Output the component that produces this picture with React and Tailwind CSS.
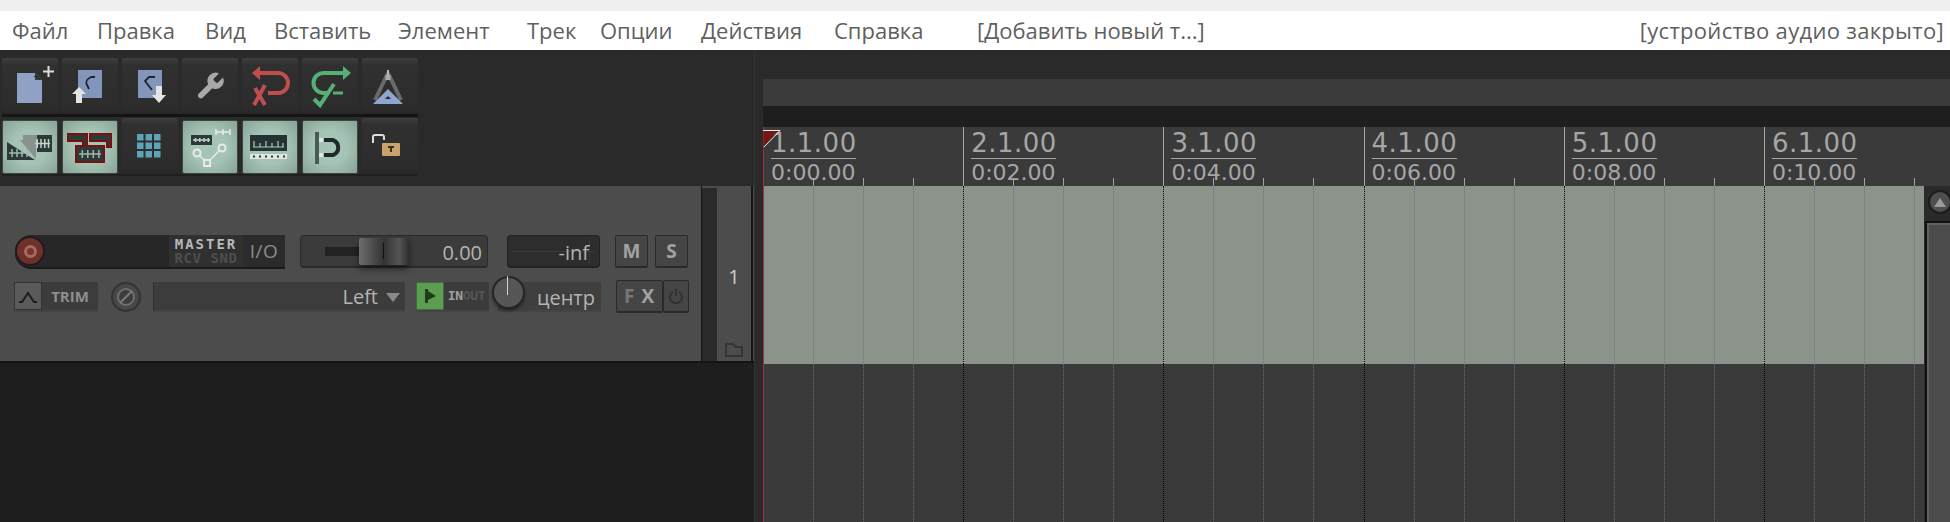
import React from 'react';

const menuItems = [
  ['Файл', 'w-[85px]'],
  ['Правка', 'w-[108px]'],
  ['Вид', 'w-[69px]'],
  ['Вставить', 'w-[124px]'],
  ['Элемент', 'w-[129px]'],
  ['Трек', 'w-[73px]'],
  ['Опции', 'w-[101px]'],
  ['Действия', 'w-[133px]'],
  ['Справка', 'w-[143px]'],
];

// toolbar button, light variant is for toggled-on actions
const ToolButton = ({ active, children }) => (
  <div className={`w-[56px] rounded-[2px] shrink-0 ${active ? 'h-[54px] mt-[2px] bg-[radial-gradient(circle,#a6c4b5_45%,#86a395_100%)] border border-[#3c4540]' : 'h-[56px] bg-[linear-gradient(#3d3d3d,#303030_12%,#2c2c2c_90%,#262626)]'}`}>
    <svg width="56" height="56" viewBox="0 0 56 56" className={`blur-[0.3px] ${active ? '-m-px' : ''}`}>{children}</svg>
  </div>
);

const Wave = ({ x, y, w, h, color = '#9fb8ab' }) => (
  <g stroke={color} strokeWidth="1.500" fill="none">
    <path d={`M${x} ${y + h / 2}h${w}`} />
    {[0.15, 0.4, 0.65, 0.9].map((p) => (
      <path key={p} d={`M${x + w * p} ${y + 1}v${h - 2}`} />
    ))}
  </g>
);

const row1 = [
  <>
    <path d="M15 15h18l7 7v23H15z" fill="#8fa1c4" />
    <path d="M33 15v7h7z" fill="#2e2e2e" />
    <path d="M31 18h2v4h4z" fill="#3b4252" />
    <path d="M41 13.500h11M46.500 8v11" stroke="#ddd" strokeWidth="2" />
  </>,
  <>
    <rect x="16" y="12" width="24" height="28" fill="#8296bb" />
    <path d="M33 19h-4c-4 2-6 4-4 8l2 4" stroke="#1f2530" strokeWidth="1.800" fill="none" />
    <path d="M17 29l7 7h-4v9h-6v-9h-4z" fill="#e4e4e4" />
  </>,
  <>
    <rect x="16" y="12" width="24" height="28" fill="#8296bb" />
    <path d="M33 19h-6l-4 4 7 9" stroke="#1f2530" strokeWidth="1.800" fill="none" />
    <path d="M34 28h6v9h4l-7 8-7-8h4z" fill="#e4e4e4" />
  </>,
  <g transform="translate(12 12) scale(1.350)">
    <path d="M14.700 6.300a1 1 0 0 0 0 1.400l1.600 1.600a1 1 0 0 0 1.400 0l3.770-3.770a6 6 0 0 1-7.940 7.940l-6.910 6.910a2.120 2.120 0 0 1-3-3l6.910-6.910a6 6 0 0 1 7.940-7.940l-3.760 3.760z" fill="#a8a8a8" />
  </g>,
  <>
    <path d="M12 15h24a10 10 0 0 1 0 20h-10" stroke="#c04e4e" strokeWidth="4" fill="none" />
    <path d="M18 8l-8 7 8 7z" fill="#c04e4e" />
    <path d="M12 47l11-20M13 30l10 17" stroke="#c04e4e" strokeWidth="4" fill="none" />
  </>,
  <>
    <path d="M42 15H22a10 10 0 0 0-1 20h4" stroke="#54b074" strokeWidth="4" fill="none" />
    <path d="M41 8l8 7-8 7z" fill="#54b074" />
    <path d="M12 41l6 6 14-21" stroke="#54b074" strokeWidth="4" fill="none" />
    <path d="M31 35h10" stroke="#54b074" strokeWidth="3" />
  </>,
  <>
    <path d="M26 15L13 42M26 15l13 27" stroke="#6a6a6a" strokeWidth="4" />
    <path d="M26 12v8" stroke="#bbb" strokeWidth="2" />
    <rect x="23.500" y="17" width="5" height="5" fill="#aaa" />
    <path d="M26 31l15 15H11z" fill="#8ea5cf" />
    <path d="M26 38l3 3h-6z" fill="#2a2a2a" />
  </>,
];

const row2 = [
  <>
    <path d="M5 22l28 18H5z" fill="#2b3a39" />
    <path d="M18 20h16v19z" fill="#87938c" />
    <rect x="21" y="15" width="14" height="5" fill="#87938c" />
    <rect x="35" y="15" width="15" height="17" fill="#2b3a39" />
    <Wave x={7} y={28} w={20} h={10} />
    <Wave x={33} y={18} w={15} h={11} color="#c3d4cb" />
  </>,
  <>
    <path d="M6 14h19v13h-4v-6H6z M28 14h21v13h-4v-6H28z" fill="#2c3a3a" stroke="#7a0f0f" strokeWidth="2" />
    <rect x="14" y="26" width="28" height="16" fill="#2c3a3a" stroke="#7a0f0f" strokeWidth="2" />
    <Wave x={17} y={29} w={22} h={10} />
  </>,
  <>
    {[15, 23.5, 32].map((x) => [16, 24.5, 33].map((y) => (
      <rect key={`${x}-${y}`} x={x} y={y} width="6.500" height="6.500" fill="#5fa3b8" />
    )))}
  </>,
  <>
    <rect x="9" y="15" width="21" height="10" fill="#2b3a39" />
    <Wave x={11} y={17} w={17} h={6} color="#c3d4cb" />
    <path d="M34 12h14M34 9v6M48 9v6M41 9v6" stroke="#e6ece8" strokeWidth="1.500" />
    <path d="M15 33l10 10 15-15" stroke="#e6ece8" strokeWidth="1.500" fill="none" />
    <circle cx="15" cy="33" r="3.500" fill="#a3c0b1" stroke="#e6ece8" strokeWidth="2" />
    <rect x="22" y="40" width="6" height="6" fill="#a3c0b1" stroke="#e6ece8" strokeWidth="2" />
    <circle cx="40" cy="28" r="3.500" fill="#a3c0b1" stroke="#e6ece8" strokeWidth="2" />
  </>,
  <>
    <rect x="8" y="15" width="37" height="16" fill="#243333" />
    <path d="M11 27h31M12 27v-6M18 27v-4M24 27v-6M30 27v-4M36 27v-6M41 27v-4" stroke="#b4c8bd" strokeWidth="1.200" fill="none" />
    <rect x="8" y="34" width="37" height="5" fill="#dfe7e2" />
    {[11, 17, 23, 29, 35, 41].map((x) => <rect key={x} x={x} y="35.500" width="2" height="2" fill="#333" />)}
  </>,
  <>
    <rect x="13" y="12" width="4" height="32" fill="#4a5a54" />
    <rect x="17" y="18" width="4" height="4" fill="#dfe7e2" />
    <rect x="17" y="33" width="4" height="4" fill="#dfe7e2" />
    <path d="M22 20h9a8 8 0 0 1 0 15h-9" stroke="#20292a" strokeWidth="4" fill="none" />
  </>,
  <>
    <path d="M11 25v-6a2 2 0 0 1 2-2h7a2 2 0 0 1 2 2v3" stroke="#dcdcdc" strokeWidth="2" fill="none" />
    <rect x="20" y="25" width="18" height="13" rx="1" fill="#c9a36b" />
    <path d="M26 29h6M29 29v5" stroke="#3a2f20" strokeWidth="2" />
  </>,
];

const Toolbar = () => (
  <div className="pl-[2px] pt-[8px] h-[136px] bg-[#2a2a2a]">
    <div className="flex gap-[4px] w-[416px] border-b-[3px] border-[#141414]">
      {row1.map((icon, i) => <ToolButton key={i}>{icon}</ToolButton>)}
    </div>
    <div className="flex gap-[4px] w-[416px] pt-[1px] border-b-[2px] border-[#202020]">
      {row2.map((icon, i) => <ToolButton key={i} active={i !== 2 && i !== 6}>{icon}</ToolButton>)}
    </div>
  </div>
);

// small beveled label button, M / S / FX
const SmallBtn = ({ className, children }) => (
  <div className={`flex items-center justify-center rounded-[2px] bg-[#454545] border border-[#2a2a2a] border-b-2 text-[#a2a2a2] font-bold ${className}`}>
    {children}
  </div>
);

const TrackPanel = () => (
  <div className="flex h-[177px] bg-[#4c4c4c] border-b-[2px] border-[#141414] font-['Open_Sans',sans-serif]">
    <div className="w-[702px] shrink-0 pt-[49px] border-r border-[#141414]">
      {/* top row: record, name, fader, meter, M/S */}
      <div className="flex items-start pl-[15px] h-[34px]">
        <div className="flex h-[34px] w-[270px] rounded-l-[16px] bg-[#272727] border-b-2 border-[#1a1a1a] items-center">
          <div className="w-[30px] h-[30px] rounded-full bg-[#201c1c] flex items-center justify-center shrink-0">
            <div className="w-[26px] h-[26px] rounded-full bg-[#70302a] flex items-center justify-center">
              <div className="w-[13px] h-[13px] rounded-full border-[3px] border-[#a66a62] bg-[#7a352e]" />
            </div>
          </div>
          <div className="flex-1" />
          <div className="w-[74px] h-[32px] bg-[#303030] text-center font-['DejaVu_Sans_Mono',monospace] text-[14px] leading-[14px] font-bold tracking-[2px] pt-[2px] whitespace-nowrap">
            <div className="text-[#b8b8b8]">MASTER</div>
            <div className="text-[#4e4e4e] tracking-[0.6px]">RCV SND</div>
          </div>
          <div className="w-[42px] h-[32px] bg-[#2b2b2b] text-[#8c8c8c] text-[19px] tracking-[0.5px] flex items-center justify-center">I/O</div>
        </div>
        <div className="relative ml-[15px] w-[188px] h-[33px] rounded-[4px] bg-[#3b3b3b] border border-[#2a2a2a] border-b-2 flex items-center justify-end pr-[5px] pt-[3px] text-[20px] text-[#b4b4b4]">
          <div className="absolute left-[24px] top-[11px] w-[40px] h-[9px] bg-[#222]" />
          <div className="absolute left-[58px] top-[2px] w-[50px] h-[27px] rounded-[2px] bg-[linear-gradient(90deg,#6e6e6e,#555_20%,#333_50%,#555_80%,#2e2e2e)] shadow-[0_4px_6px_rgba(0,0,0,0.5)]">
            <div className="ml-[24px] mt-[5px] w-[1px] h-[16px] bg-[#111]" />
          </div>
          0.00
        </div>
        <div className="relative ml-[19px] w-[93px] h-[33px] rounded-[4px] bg-[#2d2d2d] border border-[#222] border-b-2 flex items-center justify-end pr-[10px] pt-[3px] text-[20px] text-[#b4b4b4]">
          <div className="absolute left-[4px] right-[4px] top-[15px] h-px bg-[#3a3a3a]" />
          <div className="absolute right-[9px] top-[2px] bottom-[2px] w-px bg-[#3a3a3a]" />
          <span className="relative">-inf</span>
        </div>
        <SmallBtn className="ml-[15px] w-[33px] h-[33px] text-[19px]">M</SmallBtn>
        <SmallBtn className="ml-[7px] w-[33px] h-[33px] text-[19px]">S</SmallBtn>
      </div>
      {/* bottom row: trim, phase, input, pan, fx */}
      <div className="flex items-start pl-[14px] mt-[13px] h-[32px]">
        <div className="flex h-[30px] w-[84px] bg-[#3c3c3c] border-b-[2px] border-[#444] items-stretch">
          <div className="w-[28px] bg-[#5a5a5a] border border-[#333] flex items-center justify-center">
            <svg width="24" height="20" viewBox="0 0 24 20"><path d="M3 16h3l6-9 6 9h3" stroke="#1e1e1e" strokeWidth="2" fill="none" /></svg>
          </div>
          <div className="flex-1 text-center text-[15px] leading-[28px] font-bold text-[#8e8e8e]">TRIM</div>
        </div>
        <div className="ml-[13px] w-[30px] h-[30px] rounded-full bg-[#484848] border-[2px] border-[#333] flex items-center justify-center">
          <svg width="22" height="22" viewBox="0 0 22 22"><circle cx="11" cy="11" r="8" stroke="#6e6e6e" strokeWidth="2" fill="#3c3c3c" /><path d="M5 17L17 5" stroke="#7c7c7c" strokeWidth="2" /></svg>
        </div>
        <div className="ml-[12px] w-[252px] h-[30px] bg-[#3c3c3c] border-b-[2px] border-[#444] border-l border-l-[#2e2e2e] flex items-center justify-end pr-[4px] pt-[2px] text-[20px] text-[#b4b4b4]">
          Left
          <svg width="16" height="12" viewBox="0 0 16 12" className="ml-[7px]"><path d="M1 2h14l-7 9z" fill="#8a8a8a" /></svg>
        </div>
        <div className="ml-[11px] flex h-[30px] w-[73px] bg-[#3b3b3b] border-b-[2px] border-[#444]">
          <div className="w-[28px] h-[28px] bg-[#5c9d52] border border-[#3f6b38] flex items-center justify-center">
            <svg width="14" height="16" viewBox="0 0 14 16"><path d="M2 1v14h3v-3l8-4-8-5V1z" fill="#1f3d1b" /></svg>
          </div>
          <div className="flex-1 flex items-center justify-center font-['DejaVu_Sans_Mono',monospace] text-[13px] font-bold tracking-[-0.3px]">
            <span className="text-[#a0a0a0]">IN</span><span className="text-[#555]">OUT</span>
          </div>
        </div>
        <div className="relative ml-[9px] w-[103px] h-[30px] bg-[#3f3f3f] border-b-[2px] border-[#444] flex items-center justify-end pr-[6px] pt-[3px] text-[20px] text-[#b4b4b4]">
          <div className="absolute left-[-6px] top-[-6px] w-[33px] h-[33px] rounded-full bg-[#565656] border-[2px] border-[#262626] shadow-[0_2px_3px_rgba(0,0,0,0.4)]" />
          <div className="absolute left-[9px] top-[-6px] w-[1px] h-[19px] bg-[#cfcfcf]" />
          центр
        </div>
        <div className="ml-[15px] -mt-[2px] flex w-[73px] h-[33px]">
          <SmallBtn className="w-[47px] text-[19px] tracking-[7px] pl-[6px]">
            <span className="text-[#777]">F</span><span className="text-[#a2a2a2]">X</span>
          </SmallBtn>
          <SmallBtn className="w-[26px]">
            <svg width="16" height="16" viewBox="0 0 16 16"><path d="M5 4a6 6 0 1 0 6 0M8 1v7" stroke="#303030" strokeWidth="2" fill="none" /></svg>
          </SmallBtn>
        </div>
      </div>
    </div>
    <div className="w-[15px] bg-[#2a2a2a] mt-[2px]" />
    <div className="w-[36px] border-r-2 border-[#141414] flex flex-col items-center pt-[78px] pb-[4px] justify-between text-[20px] leading-[26px] text-[#cccccc]">
      1
      <svg width="18" height="14" viewBox="0 0 18 14"><path d="M1 1h7l3 3h6v9H1z" stroke="#343434" strokeWidth="2" fill="none" /></svg>
    </div>
  </div>
);

const bars = ['1.1.00', '2.1.00', '3.1.00', '4.1.00', '5.1.00', '6.1.00'];
const times = ['0:00.00', '0:02.00', '0:04.00', '0:06.00', '0:08.00', '0:10.00'];
const subs = [1, 2, 3];

const Ruler = () => (
  <div className="flex h-[59px] bg-[#3a3a3a] overflow-hidden relative">
    {bars.map((b, i) => (
      <div key={b} className={`w-[200.2px] shrink-0 border-l ${i === 0 ? 'border-[#a03040]' : 'border-[#a5a5a5]'}`}>
        <div className="pl-[7px] pt-[1px] font-['DejaVu_Sans',sans-serif] text-[#a6a6a6]">
          <div className="w-[85px] h-[31px] border-b border-[#a6a6a6] text-[26px] leading-[31px] tracking-[0.5px]">{b}</div>
          <div className="text-[22px] leading-[27px] h-[19px]">{times[i]}</div>
        </div>
        <div className="flex h-[8px]">
          <div className="w-[49px] shrink-0" />
          {subs.map((s) => <div key={s} className="w-[50px] shrink-0 border-l border-[#a5a5a5]" />)}
        </div>
      </div>
    ))}
    {/* start marker */}
    <svg width="18" height="18" viewBox="0 0 18 18" className="absolute left-0 top-[3px]">
      <path d="M0.500 0.500H16L0.500 16z" fill="#741518" />
      <path d="M0 0.500H17L1 17" stroke="#e8e8e8" strokeWidth="1" fill="none" />
    </svg>
  </div>
);

// vertical grid for item and empty area below it
const GridRow = ({ className, subColor, barColor, height }) => (
  <div className={`flex overflow-hidden ${height} ${className}`}>
    {bars.map((b, i) => (
      <div key={b} className={`w-[200.2px] shrink-0 flex border-l ${i === 0 ? 'border-solid border-[#a03040]' : `border-dotted ${barColor}`}`}>
        <div className="w-[49px] shrink-0" />
        {subs.map((s) => <div key={s} className={`w-[50px] shrink-0 border-l border-dotted ${subColor}`} />)}
      </div>
    ))}
  </div>
);

export default function App() {
  return (
    <div className="w-[1950px] h-[522px] overflow-hidden bg-[#1e1e1e]">
      <div className="h-[11px] bg-[#f0f0f0]" />
      <div className="flex items-center h-[39px] pl-[12px] pr-[6px] bg-white text-[22px] text-[#5f5f5f] font-['Open_Sans',sans-serif]">
        {menuItems.map(([label, w]) => <div key={label} className={w}>{label}</div>)}
        <div>[Добавить новый т...]</div>
        <div className="ml-auto tracking-[0.3px]">[устройство аудио закрыто]</div>
      </div>
      <div className="flex h-[472px]">
        <div className="w-[755px] shrink-0 flex flex-col border-r border-[#333]">
          <Toolbar />
          <TrackPanel />
          <div className="flex-1 bg-[#1e1e1e]" />
        </div>
        <div className="flex-1 min-w-0 flex flex-col bg-[#2a2a2a] pl-[8px]">
          <div className="h-[29px] bg-[#2a2a2a]" />
          <div className="h-[27px] bg-[#3b3b3b]" />
          <div className="h-[21px] bg-[#1e1e1e]" />
          <Ruler />
          <div className="flex flex-1 min-h-0">
            <div className="w-[1161px] shrink-0 flex flex-col">
              <GridRow height="h-[178px]" className="bg-[#8c938b]" subColor="border-[#6f7580]" barColor="border-black" />
              <GridRow height="flex-1" className="bg-[#3a3a3a]" subColor="border-[#6a6a6a]" barColor="border-black" />
            </div>
            <div className="flex-1 flex flex-col bg-[#2a2a2a]">
              <div className="w-[24px] h-[24px] mt-[4px] ml-[4px] rounded-full bg-[#4e4e4e] border-2 border-[#1c1c1c] flex items-center justify-center">
                <svg width="12" height="9" viewBox="0 0 12 9"><path d="M6 0l6 9H0z" fill="#9a9a9a" /></svg>
              </div>
              <div className="ml-[1px] flex-1 mt-[7px] border-l-2 border-t-2 border-[#111]">
                <div className="h-full bg-[#4c4c4c] border-l-2 border-t-2 border-[#626262]" />
              </div>
            </div>
          </div>
        </div>
      </div>
    </div>
  );
}
